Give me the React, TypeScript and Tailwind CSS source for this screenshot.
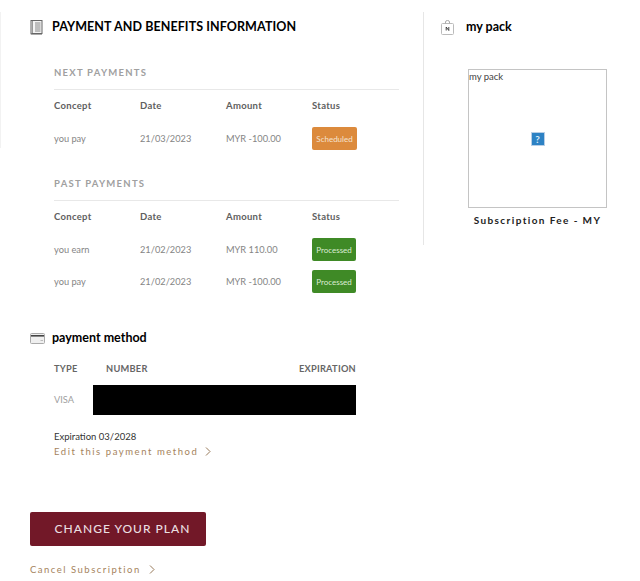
const nextPayments = [{ concept: "you pay", date: "21/03/2023", amount: "MYR -100.00", status: "Scheduled" }];
const pastPayments = [
  { concept: "you earn", date: "21/02/2023", amount: "MYR 110.00", status: "Processed" },
  { concept: "you pay", date: "21/02/2023", amount: "MYR -100.00", status: "Processed" },
];

function BookIcon() {
  return (
    <svg width="13" height="15" viewBox="0 0 13 15" fill="none" className="shrink-0">
      <rect x="1" y="0.5" width="11" height="13" fill="#f3f3f3" stroke="#666" />
      <path d="M1 13.5 L1 14.5 L12 14.5" stroke="#aaa" />
      <path d="M2.5 1 V13" stroke="#999" />
      <path d="M5 3 H10.5 M5 5 H10.5 M5 7 H10.5 M5 9 H10.5 M5 11 H10.5" stroke="#888" />
    </svg>
  );
}

function BagIcon() {
  return (
    <svg width="13" height="15" viewBox="0 0 13 15" fill="none" className="shrink-0">
      <rect x="0.5" y="3.5" width="12" height="11" rx="1" fill="#fff" stroke="#bbb" />
      <path d="M4.5 3.5 V2 Q4.5 0.5 6.5 0.5 Q8.5 0.5 8.5 2 V3.5" stroke="#aaa" />
      <path d="M5.2 10.5 V7 L7.8 10.5 V7" stroke="#333" strokeWidth="0.9" />
    </svg>
  );
}

function CardIcon() {
  return (
    <svg width="15" height="11" viewBox="0 0 15 11" fill="none" className="shrink-0">
      <rect x="0.5" y="0.5" width="14" height="10" rx="1" fill="#efefef" stroke="#aaa" />
      <rect x="1" y="2" width="13" height="1.6" fill="#444" />
      <path d="M10.5 7.5 H13" stroke="#bbb" />
    </svg>
  );
}

function Chevron() {
  return (
    <svg width="6" height="9" viewBox="0 0 6 9" fill="none" className="shrink-0">
      <path d="M1 0.5 L5 4.5 L1 8.5" stroke="#8a6a45" strokeWidth="0.9" />
    </svg>
  );
}

function PaymentTable({ title, rows }: { title: string; rows: typeof pastPayments }) {
  return (
    <div>
      <h3 className="h-[32px] border-b border-[#e8e8e8] text-[9.5px] leading-[30px] font-bold tracking-[1.25px] text-[#a0a0a0]">
        {title}
      </h3>
      <div className="mt-[8px] grid h-[16px] grid-cols-[86px_86px_86px_1fr] items-center text-[9.5px] font-bold tracking-[0.3px] text-[#606060]">
        <span>Concept</span>
        <span>Date</span>
        <span>Amount</span>
        <span>Status</span>
      </div>
      <div className="mt-[13px] flex flex-col gap-[9px]">
        {rows.map((row, i) => (
          <div key={i} className="grid h-[23px] grid-cols-[86px_86px_86px_1fr] items-center text-[9.25px] text-[#858585]">
            <span>{row.concept}</span>
            <span>{row.date}</span>
            <span>{row.amount}</span>
            <span
              className={
                row.status === "Scheduled"
                  ? "flex h-[23px] w-[45px] items-center justify-center rounded-[2px] bg-[#dc8a3c] text-[8px] text-[#f5e2cf]"
                  : "flex h-[23px] w-[44px] items-center justify-center rounded-[2px] bg-[#3f8a26] text-[8px] text-[#dcecd4]"
              }
            >
              {row.status}
            </span>
          </div>
        ))}
      </div>
    </div>
  );
}

export default function App() {
  return (
    <div className="h-[581px] w-[640px] overflow-hidden bg-white font-['Lato',sans-serif] text-black">
      <div className="flex h-[245px] items-start pt-[12px]">
        <div className="h-[136px] w-px bg-[#f2f2f2]" />
        <div className="w-[422px] pl-[29px]">
          <div className="mt-[7px] flex h-[16px] items-center gap-[9px]">
            <BookIcon />
            <h2 className="pt-px text-[12.5px] font-bold tracking-[0.08px]">PAYMENT AND BENEFITS INFORMATION</h2>
          </div>
          <div className="mt-[23px] ml-[24px] w-[345px]">
            <PaymentTable title="NEXT PAYMENTS" rows={nextPayments} />
            <div className="mt-[19px]">
              <PaymentTable title="PAST PAYMENTS" rows={pastPayments} />
            </div>
          </div>
        </div>
        <div className="h-[233px] w-[217px] border-l border-[#e6e6e6] pl-[17px]">
          <div className="mt-[7px] flex h-[16px] items-center gap-[12px]">
            <BagIcon />
            <h2 className="text-[12.5px] font-bold">my pack</h2>
          </div>
          <div className="mt-[34px] ml-[27px] flex h-[139px] w-[139px] flex-col border border-[#c4c4c4]">
            <span className="text-[9.5px] leading-[13px] text-[#444]">my pack</span>
            <div className="flex flex-1 items-center justify-center pb-[13px]">
              <span className="flex h-[14px] w-[14px] items-center justify-center border border-[#b9cfe6] bg-[#2d82c4] text-[10px] leading-none font-bold text-[#dcecf8]">
                ?
              </span>
            </div>
          </div>
          <p className="mt-[5px] ml-[24px] w-[145px] text-center text-[10px] font-bold tracking-[1.4px] text-[#222]">
            Subscription Fee - MY
          </p>
        </div>
      </div>

      <div className="mt-[85px] pl-[30px]">
        <div className="flex h-[16px] items-center gap-[7px]">
          <CardIcon />
          <h2 className="text-[12.5px] font-bold">payment method</h2>
        </div>
        <div className="ml-[24px] w-[302px]">
          <div className="mt-[15px] flex h-[16px] items-center text-[9.25px] font-bold tracking-[0.25px] text-[#666]">
            <span className="w-[52px]">TYPE</span>
            <span>NUMBER</span>
            <span className="ml-auto">EXPIRATION</span>
          </div>
          <div className="mt-[8px] flex h-[30px] items-center">
            <span className="w-[39px] text-[9.25px] text-[#a0a0a0]">VISA</span>
            <div className="h-[30px] flex-1 bg-black" />
          </div>
          <p className="mt-[15px] text-[9.5px] leading-[13px] text-[#333]">Expiration 03/2028</p>
          <a className="mt-[2px] flex items-center gap-[7px] text-[9.5px] leading-[13px] tracking-[1.55px] text-[#a5835c]">
            Edit this payment method
            <Chevron />
          </a>
        </div>
        <button className="mt-[54px] flex h-[34px] w-[176px] items-center justify-center rounded-[2px] bg-[#721828] pl-[9px] text-[12px] font-medium tracking-[1px] text-[#eadfe0]">
          CHANGE YOUR PLAN
        </button>
        <a className="mt-[17px] flex items-center gap-[8px] text-[9.5px] leading-[13px] tracking-[1.5px] text-[#a5835c]">
          Cancel Subscription
          <Chevron />
        </a>
      </div>
    </div>
  );
}
